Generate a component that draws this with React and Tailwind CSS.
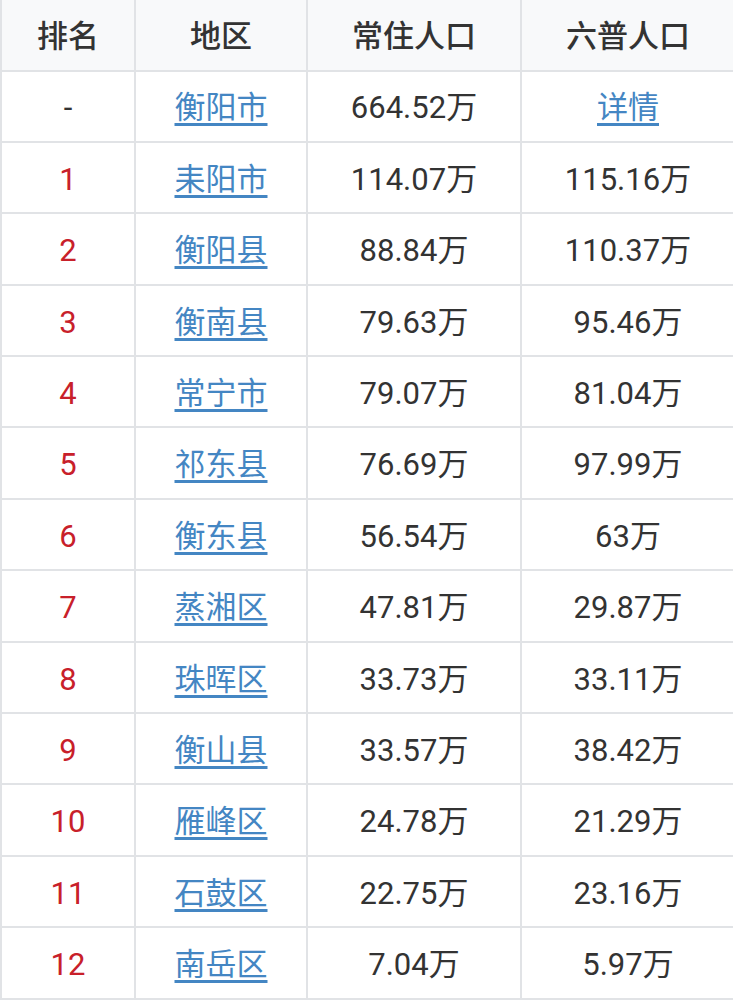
import React from 'react';

// 衡阳各区县人口排名表
const rows = [
  { rank: '-', name: '衡阳市', now: '664.52万', six: '详情', sixLink: true },
  { rank: '1', name: '耒阳市', now: '114.07万', six: '115.16万' },
  { rank: '2', name: '衡阳县', now: '88.84万', six: '110.37万' },
  { rank: '3', name: '衡南县', now: '79.63万', six: '95.46万' },
  { rank: '4', name: '常宁市', now: '79.07万', six: '81.04万' },
  { rank: '5', name: '祁东县', now: '76.69万', six: '97.99万' },
  { rank: '6', name: '衡东县', now: '56.54万', six: '63万' },
  { rank: '7', name: '蒸湘区', now: '47.81万', six: '29.87万' },
  { rank: '8', name: '珠晖区', now: '33.73万', six: '33.11万' },
  { rank: '9', name: '衡山县', now: '33.57万', six: '38.42万' },
  { rank: '10', name: '雁峰区', now: '24.78万', six: '21.29万' },
  { rank: '11', name: '石鼓区', now: '22.75万', six: '23.16万' },
  { rank: '12', name: '南岳区', now: '7.04万', six: '5.97万' },
];

const cols = 'grid grid-cols-[134px_172px_214px_214px]';
const cell = 'flex items-center justify-center pt-[5px] border-l-2 border-[#e1e3e6]';
const link = 'text-[#4486c3] underline decoration-[3px] underline-offset-[5px]';

export default function App() {
  return (
    <div
      className="w-[733px] h-[1000px] overflow-hidden bg-white text-[31px] text-[#333]"
      style={{ fontFamily: 'Roboto, "Noto Sans CJK SC", sans-serif' }}
    >
      <div className="w-[734px]">
        {/* header */}
        <div className={`${cols} h-[71.5px] bg-[#f8f9fa] border-b-2 border-[#e1e3e6] font-medium`}>
          <div className={cell}>排名</div>
          <div className={cell}>地区</div>
          <div className={cell}>常住人口</div>
          <div className={cell}>六普人口</div>
        </div>

        {rows.map((r) => (
          <div key={r.name} className={`${cols} h-[71.4px] border-b-2 border-[#e1e3e6]`}>
            <div className={`${cell} ${r.rank === '-' ? 'text-[#333]' : 'text-[#c8202a]'}`}>{r.rank}</div>
            <div className={cell}>
              <span className={link}>{r.name}</span>
            </div>
            <div className={cell}>{r.now}</div>
            <div className={cell}>
              {r.sixLink ? <span className={link}>{r.six}</span> : r.six}
            </div>
          </div>
        ))}
      </div>
    </div>
  );
}
